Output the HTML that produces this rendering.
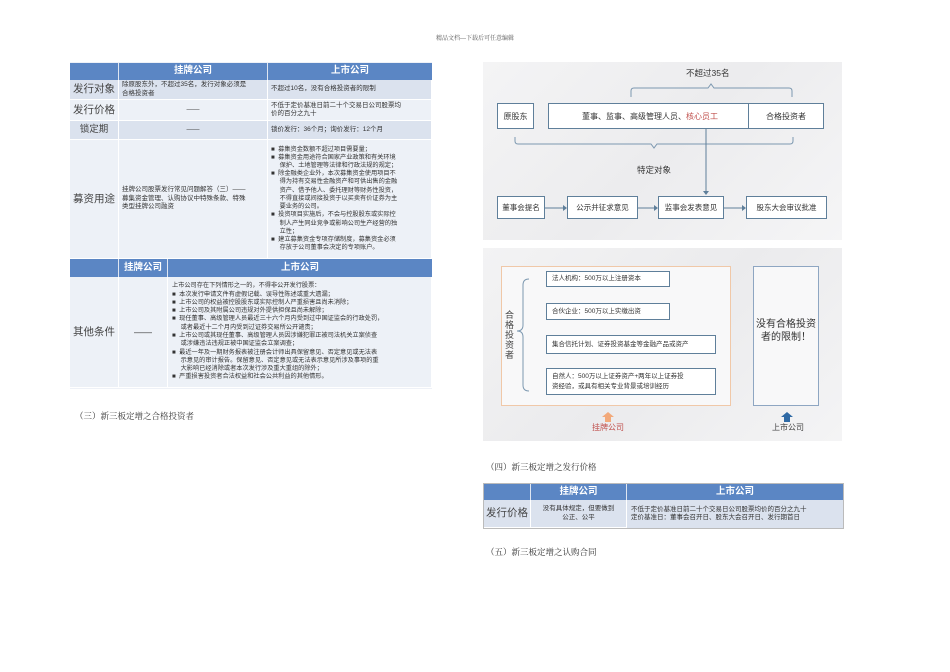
<!DOCTYPE html>
<html><head><meta charset="utf-8"><style>
*{margin:0;padding:0;box-sizing:border-box}
body{width:950px;height:672px;background:#fff;position:relative;font-family:"Liberation Sans","Noto Sans CJK SC",sans-serif;overflow:hidden}
.a{position:absolute}
.c{position:absolute;display:flex;align-items:center;color:#333;font-size:6.5px;line-height:8.5px;overflow:hidden}
.h{background:#5b86c4;color:#fff;font-weight:bold;font-size:9.5px;justify-content:center;border-right:1px solid #dfe6f2}
.l{font-size:10.5px;justify-content:center;color:#444}
.r1{background:#dbe2ee}.r2{background:#edf1f7}
.b{border-right:1px solid #fff;border-bottom:1px solid #fff}
.serif{font-family:"Liberation Serif","Noto Serif CJK SC",serif;color:#333}
.box{position:absolute;border:1.5px solid #5f7f9a;background:#fff;font-size:8px;color:#333;display:flex;align-items:center;justify-content:center}
.box2{position:absolute;border:1.5px solid #5f7f9a;background:#fff;font-size:6.5px;color:#333;display:flex;align-items:center;padding-left:5px;line-height:10px}
</style></head><body>
<div class="a serif" style="left:0;width:950px;top:33px;text-align:center;font-size:6px;color:#555">精品文档---下载后可任意编辑</div>

<div class="a" style="left:70px;top:62px;width:362px;height:327px;background:#eef1f7"></div>
<div class="c h" style="left:70px;top:63px;width:49px;height:17px"></div>
<div class="c h" style="left:119px;top:63px;width:149px;height:17px">挂牌公司</div>
<div class="c h" style="left:268px;top:63px;width:164px;height:17px;border:0">上市公司</div>

<div class="c l r1 b" style="left:70px;top:80px;width:49px;height:20px">发行对象</div>
<div class="c r1 b" style="left:119px;top:80px;width:149px;height:20px;padding-left:3px">除原股东外，不超过35名，发行对象必须是<br>合格投资者</div>
<div class="c r1 b" style="left:268px;top:80px;width:164px;height:20px;padding-left:3px">不超过10名，没有合格投资者的限制</div>

<div class="c l r2 b" style="left:70px;top:100px;width:49px;height:21px">发行价格</div>
<div class="c r2 b" style="left:119px;top:100px;width:149px;height:21px;justify-content:center">——</div>
<div class="c r2 b" style="left:268px;top:100px;width:164px;height:21px;padding-left:3px">不低于定价基准日前二十个交易日公司股票均<br>价的百分之九十</div>

<div class="c l r1 b" style="left:70px;top:121px;width:49px;height:19px;font-size:9.5px">锁定期</div>
<div class="c r1 b" style="left:119px;top:121px;width:149px;height:19px;justify-content:center">——</div>
<div class="c r1 b" style="left:268px;top:121px;width:164px;height:19px;padding-left:3px">锁价发行：36个月；询价发行：12个月</div>

<div class="c l r2 b" style="left:70px;top:140px;width:49px;height:119px">募资用途</div>
<div class="c r2 b" style="left:119px;top:140px;width:149px;height:119px;padding-left:3px">挂牌公司股票发行常见问题解答（三）——<br>募集资金管理、认购协议中特殊条款、特殊<br>类型挂牌公司融资</div>
<div class="c r2 b" style="left:268px;top:140px;width:164px;height:119px;padding-left:3px;font-size:6.2px;line-height:8.2px"><div>■&nbsp;&nbsp;募集资金数额不超过项目需要量；<br>■&nbsp;&nbsp;募集资金用途符合国家产业政策和有关环境<br>&nbsp;&nbsp;&nbsp;&nbsp;&nbsp;保护、土地管理等法律和行政法规的规定；<br>■&nbsp;&nbsp;除金融类企业外，本次募集资金使用项目不<br>&nbsp;&nbsp;&nbsp;&nbsp;&nbsp;得为持有交易性金融资产和可供出售的金融<br>&nbsp;&nbsp;&nbsp;&nbsp;&nbsp;资产、借予他人、委托理财等财务性投资，<br>&nbsp;&nbsp;&nbsp;&nbsp;&nbsp;不得直接或间接投资于以买卖有价证券为主<br>&nbsp;&nbsp;&nbsp;&nbsp;&nbsp;要业务的公司。<br>■&nbsp;&nbsp;投资项目实施后，不会与控股股东或实际控<br>&nbsp;&nbsp;&nbsp;&nbsp;&nbsp;制人产生同业竞争或影响公司生产经营的独<br>&nbsp;&nbsp;&nbsp;&nbsp;&nbsp;立性；<br>■&nbsp;&nbsp;建立募集资金专项存储制度，募集资金必须<br>&nbsp;&nbsp;&nbsp;&nbsp;&nbsp;存放于公司董事会决定的专项账户。</div></div>

<div class="c h" style="left:70px;top:259px;width:49px;height:18px"></div>
<div class="c h" style="left:119px;top:259px;width:49px;height:18px">挂牌公司</div>
<div class="c h" style="left:168px;top:259px;width:264px;height:18px;border:0">上市公司</div>
<div class="c l r2 b" style="left:70px;top:277px;width:49px;height:111px">其他条件</div>
<div class="c r2 b" style="left:119px;top:277px;width:49px;height:111px;justify-content:center;font-size:9px">——</div>
<div class="c r2 b" style="left:168px;top:277px;width:264px;height:111px;padding-left:4px;font-size:6.2px;line-height:8.3px"><div>上市公司存在下列情形之一的，不得非公开发行股票：<br>■&nbsp;&nbsp;本次发行申请文件有虚假记载、误导性陈述或重大遗漏；<br>■&nbsp;&nbsp;上市公司的权益被控股股东或实际控制人严重损害且尚未消除；<br>■&nbsp;&nbsp;上市公司及其附属公司违规对外提供担保且尚未解除；<br>■&nbsp;&nbsp;现任董事、高级管理人员最近三十六个月内受到过中国证监会的行政处罚，<br>&nbsp;&nbsp;&nbsp;&nbsp;&nbsp;或者最近十二个月内受到过证券交易所公开谴责；<br>■&nbsp;&nbsp;上市公司或其现任董事、高级管理人员因涉嫌犯罪正被司法机关立案侦查<br>&nbsp;&nbsp;&nbsp;&nbsp;&nbsp;或涉嫌违法违规正被中国证监会立案调查；<br>■&nbsp;&nbsp;最近一年及一期财务报表被注册会计师出具保留意见、否定意见或无法表<br>&nbsp;&nbsp;&nbsp;&nbsp;&nbsp;示意见的审计报告。保留意见、否定意见或无法表示意见所涉及事项的重<br>&nbsp;&nbsp;&nbsp;&nbsp;&nbsp;大影响已经消除或者本次发行涉及重大重组的除外；<br>■&nbsp;&nbsp;严重损害投资者合法权益和社会公共利益的其他情形。</div></div>

<div class="a serif" style="left:75px;top:410px;font-size:8.5px">（三）新三板定增之合格投资者</div>

<div class="a" style="left:483px;top:62px;width:359px;height:178px;background:linear-gradient(135deg,#f4f4f5,#ececee 50%,#f5f5f6)"></div>
<div class="a" style="left:686px;top:67px;font-size:8.5px;color:#333">不超过35名</div>
<svg class="a" style="left:0;top:0" width="950" height="672">
<path d="M631 97 V91 Q631 88 634 88 H708 L711 84 L714 88 H789 Q792 88 792 91 V97" fill="none" stroke="#7c98b0" stroke-width="1"/>
<path d="M515 137 V141 Q515 144 518 144 H651 L654 148 L657 144 H790 Q793 144 793 141 V137" fill="none" stroke="#7c98b0" stroke-width="1"/>
<path d="M706 128 V194" stroke="#5f7f9a" stroke-width="1"/>
<path d="M703 191 L706 195 L709 191" fill="#5f7f9a"/>
<path d="M545 208 H566 M638 208 H657 M724 208 H745" stroke="#5f7f9a" stroke-width="1"/>
<path d="M563 205 L567 208 L563 211 M654 205 L658 208 L654 211 M742 205 L746 208 L742 211" fill="#5f7f9a"/>
</svg>
<div class="box" style="left:497px;top:103px;width:37px;height:26px">原股东</div>
<div class="box" style="left:548px;top:103px;width:204px;height:26px">董事、监事、高级管理人员、<span style="color:#c0504d">核心员工</span></div>
<div class="box" style="left:748px;top:103px;width:76px;height:26px">合格投资者</div>
<div class="a" style="left:637px;top:164px;font-size:8.5px;color:#333">特定对象</div>
<div class="box" style="left:497px;top:196px;width:48px;height:23px;font-size:7.5px">董事会提名</div>
<div class="box" style="left:567px;top:196px;width:71px;height:23px;font-size:7.5px">公示并征求意见</div>
<div class="box" style="left:658px;top:196px;width:66px;height:23px;font-size:7.5px">监事会发表意见</div>
<div class="box" style="left:746px;top:196px;width:81px;height:23px;font-size:7.5px">股东大会审议批准</div>

<div class="a" style="left:483px;top:248px;width:359px;height:193px;background:linear-gradient(135deg,#f3f3f4,#ebebed 50%,#f4f4f5)"></div>
<div class="a" style="left:501px;top:266px;width:230px;height:140px;border:1px solid #f0c8a8;background:#f8f8f9"></div>
<div class="a" style="left:753px;top:266px;width:66px;height:140px;border:1.5px solid #8ea6c2;background:#f8f8f9"></div>
<div class="a" style="left:753px;top:318px;width:66px;text-align:center;font-size:10px;line-height:13px;color:#333">没有合格投资<br>者的限制！</div>
<div class="a" style="left:505px;top:310px;width:10px;font-size:9px;line-height:10px;color:#444">合格投资者</div>
<svg class="a" style="left:515px;top:275px" width="20" height="120"><path d="M14 4 Q8 4 8 10 V50 Q8 56 2 56 Q8 56 8 62 V110 Q8 116 14 116" fill="none" stroke="#7c98b0" stroke-width="1"/></svg>
<div class="box2" style="left:546px;top:271px;width:124px;height:16px">法人机构：500万以上注册资本</div>
<div class="box2" style="left:546px;top:303px;width:124px;height:17px">合伙企业：500万以上实缴出资</div>
<div class="box2" style="left:546px;top:335px;width:170px;height:19px">集合信托计划、证券投资基金等金融产品或资产</div>
<div class="box2" style="left:546px;top:368px;width:170px;height:27px">自然人：500万以上证券资产+两年以上证券投<br>资经验，或具有相关专业背景或培训经历</div>
<svg class="a" style="left:601px;top:412px" width="14" height="10"><path d="M1 5 L7 0 L13 5 H10 V10 H4 V5 Z" fill="#f2a97a"/></svg>
<div class="a" style="left:592px;top:422px;font-size:8px;color:#c0504d">挂牌公司</div>
<svg class="a" style="left:780px;top:412px" width="14" height="10"><path d="M1 5 L7 0 L13 5 H10 V10 H4 V5 Z" fill="#2f6aa5"/></svg>
<div class="a" style="left:772px;top:422px;font-size:8px;color:#444">上市公司</div>

<div class="a serif" style="left:486px;top:461px;font-size:8.5px">（四）新三板定增之发行价格</div>

<div class="a" style="left:483px;top:483px;width:361px;height:46px;background:#dbe2ee;border:1px solid #bbb"></div>
<div class="c h" style="left:484px;top:484px;width:47px;height:16px"></div>
<div class="c h" style="left:531px;top:484px;width:96px;height:16px">挂牌公司</div>
<div class="c h" style="left:627px;top:484px;width:216px;height:16px;border:0">上市公司</div>
<div class="c l r1 b" style="left:484px;top:500px;width:47px;height:28px">发行价格</div>
<div class="c r1 b" style="left:531px;top:500px;width:96px;height:28px;justify-content:center;text-align:center">没有具体规定，但要做到<br>公正、公平</div>
<div class="c r1" style="left:627px;top:500px;width:216px;height:28px;padding-left:4px">不低于定价基准日前二十个交易日公司股票均价的百分之九十<br>定价基准日：董事会召开日、股东大会召开日、发行期首日</div>

<div class="a serif" style="left:486px;top:546px;font-size:8.5px">（五）新三板定增之认购合同</div>
</body></html>
